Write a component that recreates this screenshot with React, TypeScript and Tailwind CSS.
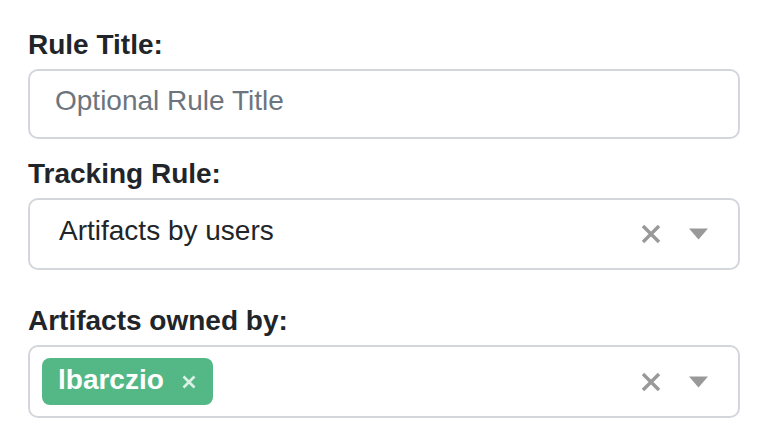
import React from 'react';

function ClearIcon() {
  return (
    <svg width="20" height="20" viewBox="0 0 20 20" className="text-[#999999]">
      <path d="M2 2L18 18M18 2L2 18" stroke="currentColor" strokeWidth="3.4" strokeLinecap="butt" />
    </svg>
  );
}

function Caret() {
  return (
    <svg width="19" height="12" viewBox="0 0 19 12" className="text-[#999999]">
      <path d="M0 0.5H19L9.5 11.5Z" fill="currentColor" />
    </svg>
  );
}

function Label({ children }: { children: React.ReactNode }) {
  return <label className="block text-[28px] leading-8 font-bold text-[#212529]">{children}</label>;
}

function Controls() {
  return (
    <div className="flex items-center gap-[28px] pr-[30px]">
      <ClearIcon />
      <Caret />
    </div>
  );
}

export default function App() {
  return (
    <div
      className="min-h-[448px] bg-white pl-[28px] pr-[24px] pt-[29px]"
      style={{ fontFamily: '"Liberation Sans", Arial, sans-serif' }}
    >
      {/* Rule title */}
      <Label>Rule Title:</Label>
      <div className="mt-[8px] flex h-[70px] items-center rounded-[10px] border-2 border-[#d3d7db] pb-[6px] pl-[25px]">
        <span className="text-[28px] leading-8 text-[#6c757d]">Optional Rule Title</span>
      </div>

      {/* Tracking rule select */}
      <div className="mt-[19px]">
        <Label>Tracking Rule:</Label>
      </div>
      <div className="mt-[8px] flex h-[72px] items-center justify-between rounded-[10px] border-2 border-[#d3d7db]">
        <span className="pb-[6px] pl-[29px] text-[28px] leading-8 text-[#212529]">Artifacts by users</span>
        <Controls />
      </div>

      {/* Owners multi select */}
      <div className="mt-[35px]">
        <Label>Artifacts owned by:</Label>
      </div>
      <div className="mt-[8px] flex h-[73px] items-center justify-between rounded-[10px] border-2 border-[#d3d7db]">
        <div className="pl-[12px]">
          <span className="flex h-[47px] items-center gap-[18px] rounded-[8px] bg-[#54b886] pl-[16px] pr-[17px]">
            <span className="pb-[4px] text-[28px] leading-8 font-bold text-white">lbarczio</span>
            <svg width="14" height="14" viewBox="0 0 14 14" className="text-[#dcf1e5]">
              <path d="M1.5 1.5L12.5 12.5M12.5 1.5L1.5 12.5" stroke="currentColor" strokeWidth="2.6" />
            </svg>
          </span>
        </div>
        <Controls />
      </div>
    </div>
  );
}
